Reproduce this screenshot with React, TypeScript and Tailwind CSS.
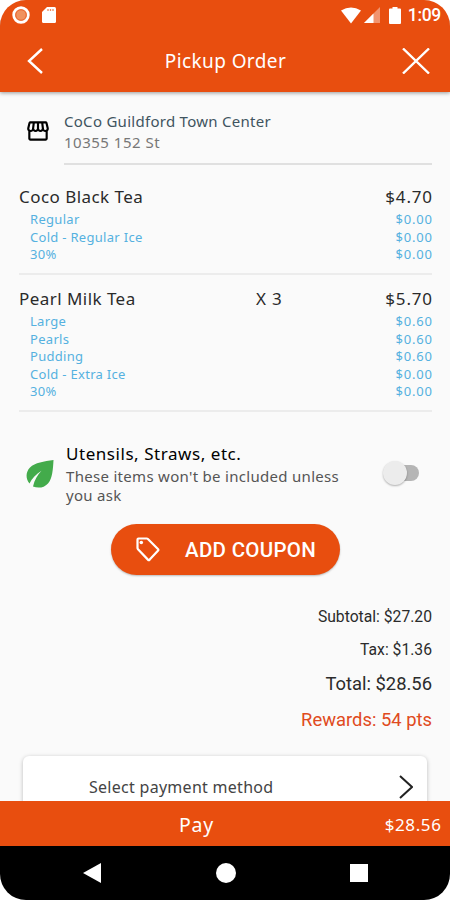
import { MdOutlineStorefront } from "react-icons/md";

type Option = { name: string; price: string };
type OrderItem = { name: string; qty?: string; price: string; options: Option[] };

const items: OrderItem[] = [
  {
    name: "Coco Black Tea",
    price: "$4.70",
    options: [
      { name: "Regular", price: "$0.00" },
      { name: "Cold - Regular Ice", price: "$0.00" },
      { name: "30%", price: "$0.00" },
    ],
  },
  {
    name: "Pearl Milk Tea",
    qty: "X 3",
    price: "$5.70",
    options: [
      { name: "Large", price: "$0.60" },
      { name: "Pearls", price: "$0.60" },
      { name: "Pudding", price: "$0.60" },
      { name: "Cold - Extra Ice", price: "$0.00" },
      { name: "30%", price: "$0.00" },
    ],
  },
];

function StatusBar() {
  return (
    <div className="flex h-[30px] items-center pl-3 pr-[9px] text-white">
      <svg width="18" height="18" viewBox="0 0 18 18">
        <circle cx="9" cy="9" r="7.4" fill="#f0925f" stroke="white" strokeWidth="2.6" />
        <circle cx="9" cy="9" r="5.2" fill="none" stroke="#ec6a35" strokeWidth="1" />
      </svg>
      <svg className="ml-3" width="14" height="18" viewBox="0 0 14 18">
        <path d="M5 1h7.5Q14 1 14 2.5v13q0 1.500-1.500 1.500h-11Q0 17 0 15.500V6z" fill="white" />
        <path d="M6 3v2M8.500 3v2M11 3v2" stroke="#ef8a5c" strokeWidth="1.300" />
      </svg>
      <div className="flex-1" />
      <svg width="20" height="17" viewBox="0 0 20 17">
        <path d="M0 3.500Q10-2.500 20 3.500L10 16.500z" fill="white" />
      </svg>
      <svg className="ml-[3px]" width="16" height="16" viewBox="0 0 16 16">
        <path d="M16 0v16H0z" fill="white" opacity="0.4" />
        <path d="M9.500 6.500V16H0z" fill="white" />
      </svg>
      <svg className="ml-[9px]" width="12" height="17" viewBox="0 0 12 17">
        <path d="M3.500 0h5v1.500H11q1 0 1 1V16q0 1-1 1H1q-1 0-1-1V2.500q0-1 1-1h2.500z" fill="white" />
      </svg>
      <span className="ml-[7px] pt-px font-[Roboto] text-[17.5px] leading-none font-medium tracking-[-0.3px]">1:09</span>
    </div>
  );
}

function LeafIcon() {
  return (
    <svg className="mt-[18px] shrink-0" width="28" height="28" viewBox="0 0 28 28">
      <path
        d="M27.500 0C18 1.500 9 2.500 4 7.500C-0.500 12-0.500 19 3.500 23.500C6 18.500 10 14 15.500 10.800C11.500 15 8.500 20 7 26.500C12 28.500 18 28 22 23.500C26.500 18.500 27 9 27.500 0z"
        fill="#43ab4b"
      />
    </svg>
  );
}

function TagIcon() {
  return (
    <svg width="24" height="25" viewBox="0 0 24 25" fill="none" stroke="white" strokeWidth="2.2">
      <path d="M2.500 1.500h8.200q0.700 0 1.200 0.500l10 10q0.900 0.900 0 1.800l-8.200 8.800q-0.900 0.900-1.800 0L2 12.300q-0.500-0.500-0.500-1.200V2.500q0-1 1-1z" strokeLinejoin="round" />
      <circle cx="5.300" cy="5.500" r="1.800" fill="white" stroke="none" />
    </svg>
  );
}

function ItemRow({ item }: { item: OrderItem }) {
  return (
    <div className="ml-[19px] mr-[18px] border-b-2 border-[#ececec] pb-[9px]">
      <div className="mb-[2px] flex h-6 items-center text-[17px] text-[#2a2a2a]">
        <span className="w-[237px] tracking-[0.45px]">{item.name}</span>
        <span className="flex-1 tracking-[0.8px]">{item.qty}</span>
        <span className="-mr-[0.8px] tracking-[0.8px]">{item.price}</span>
      </div>
      {item.options.map((option) => (
        <div key={option.name} className="flex h-[17.5px] items-center justify-between pl-[11px] text-[13px] text-[#55b1e0]">
          <span className="tracking-[0.3px]">{option.name}</span>
          <span className="-mr-[0.8px] tracking-[0.8px]">{option.price}</span>
        </div>
      ))}
    </div>
  );
}

export default function App() {
  return (
    <div className="h-[900px] w-[450px] bg-white">
      <div className="flex h-full flex-col overflow-hidden rounded-[26px] bg-[#fafafa] font-['Noto_Sans',sans-serif]">
        {/* Header */}
        <header className="z-10 h-[92px] shrink-0 bg-[#e84e0f] text-white shadow-[0_1px_4px_rgba(0,0,0,0.4)]">
          <StatusBar />
          <div className="flex h-[62px] items-center justify-between pl-[27px] pr-5">
            <svg width="16" height="26" viewBox="0 0 16 26" fill="none" stroke="white" strokeWidth="2.4">
              <path d="M15 1L2 13l13 12" />
            </svg>
            <h1 className="pl-1.5 pt-px text-[19px] tracking-[0.4px]">Pickup Order</h1>
            <svg width="28" height="26" viewBox="0 0 28 26" stroke="white" strokeWidth="2.4">
              <path d="M1 0.500l26 25M27 0.500l-26 25" />
            </svg>
          </div>
        </header>

        <main className="flex min-h-0 flex-1 flex-col overflow-hidden">
          {/* Store */}
          <div className="flex pl-[25px] pr-[18px] pt-[19px]">
            <MdOutlineStorefront className="mt-[7px] size-[26px] shrink-0 text-black" />
            <div className="ml-[13px] h-[54px] flex-1 border-b-2 border-[#e0e0e0] text-[15px] leading-[21px]">
              <p className="tracking-[0.28px] text-[#40545f]">CoCo Guildford Town Center</p>
              <p className="tracking-[0.5px] text-[#777]">10355 152 St</p>
            </div>
          </div>

          <div className="flex flex-col gap-[12.5px] pt-5">
            {items.map((item) => (
              <ItemRow key={item.name} item={item} />
            ))}
          </div>

          {/* Utensils */}
          <div className="mt-[30.5px] flex pl-[25.5px] pr-[30px]">
            <LeafIcon />
            <div className="ml-[12.5px] w-[300px]">
              <p className="mb-px text-[17px] leading-6 tracking-[0.55px] text-black">Utensils, Straws, etc.</p>
              <p className="text-[15px] leading-[19px] tracking-[0.3px] text-[#555]">
                These items won't be included unless
                <br />
                you ask
              </p>
            </div>
            <div className="ml-[18px] mt-[23px] flex h-4 w-[35px] items-center rounded-full bg-[#b5b5b5]">
              <span className="-ml-[1px] size-6 shrink-0 rounded-full bg-[#ececec] shadow-[0_1px_2px_rgba(0,0,0,0.3)]" />
            </div>
          </div>

          <button className="ml-[111px] mt-[19px] flex h-[51px] w-[229px] shrink-0 items-center rounded-full bg-[#e84e0f] pl-[25px] text-white shadow-[0_1px_2px_rgba(0,0,0,0.25)]">
            <TagIcon />
            <span className="ml-[25px] pt-0.5 font-[Roboto] text-[20.5px] font-medium tracking-[0.3px]">ADD COUPON</span>
          </button>

          {/* Totals */}
          <div className="mt-[25px] pr-[18px] text-right font-[Roboto] text-[#2b2b2b]">
            <p className="h-[33px] text-[15.7px] leading-[33px]">Subtotal: $27.20</p>
            <p className="h-[33px] text-[15.7px] leading-[33px]">Tax: $1.36</p>
            <p className="h-9 text-[18.4px] leading-9">Total: $28.56</p>
            <p className="h-9 text-[18.4px] leading-9 text-[#e04a20]">Rewards: 54 pts</p>
          </div>

          <div className="mx-[23px] mt-[18px] flex h-[62px] shrink-0 items-center justify-between rounded-t-md bg-white pl-[66px] pr-3.5 shadow-[0_1px_4px_rgba(0,0,0,0.25)]">
            <span className="text-[16px] tracking-[0.28px] text-[#444]">Select payment method</span>
            <svg width="14" height="24" viewBox="0 0 14 24" fill="none" stroke="#222" strokeWidth="2">
              <path d="M1 1l12 11L1 23" />
            </svg>
          </div>
        </main>

        {/* Pay bar */}
        <div className="z-10 flex h-[45px] shrink-0 items-center justify-between bg-[#e84e0f] pl-[179px] pr-[9px] pt-[3px] text-white">
          <span className="text-[19.5px] tracking-[0.8px]">Pay</span>
          <span className="-mr-[0.5px] text-[17px] tracking-[0.6px]">$28.56</span>
        </div>

        <nav className="flex h-[54px] shrink-0 items-center justify-between bg-black pl-[83px] pr-[82px]">
          <svg width="18" height="20" viewBox="0 0 18 20" fill="white">
            <path d="M18 0v20L0 10z" />
          </svg>
          <span className="size-5 rounded-full bg-white" />
          <span className="size-[18px] bg-white" />
        </nav>
      </div>
    </div>
  );
}
